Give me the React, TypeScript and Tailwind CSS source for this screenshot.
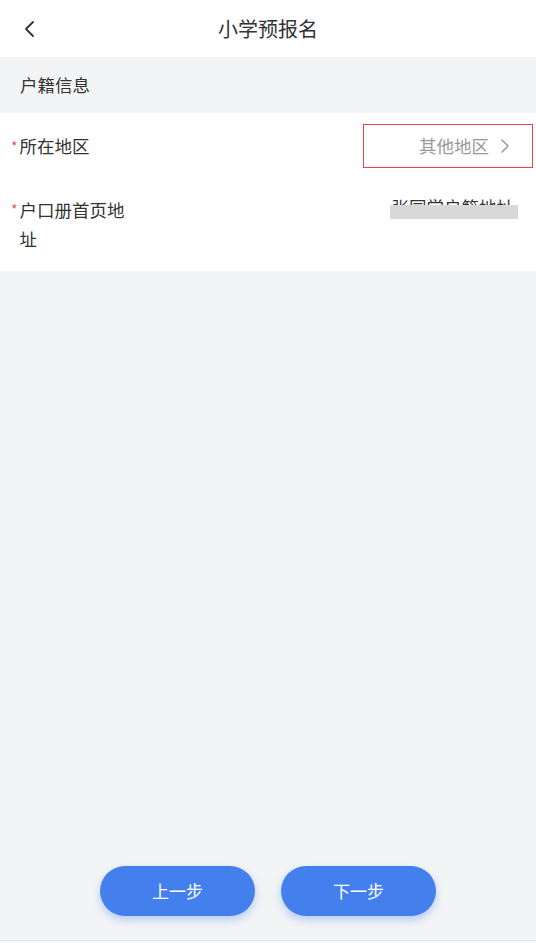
import React from "react";

export default function App() {
  return (
    <div
      className="w-[536px] h-[943px] flex flex-col bg-[#f3f4f6] text-[#333333]"
      style={{ fontFamily: '"Noto Sans CJK SC", "Noto Sans", sans-serif' }}
    >
      <div className="h-[57px] bg-white flex items-center relative shrink-0">
        <div className="pl-[22px] w-[60px] flex items-center">
          <svg width="14" height="20" viewBox="0 0 14 20" fill="none">
            <path d="M11 3 L4 10 L11 17" stroke="#333" strokeWidth="1.8" strokeLinecap="round" strokeLinejoin="round" />
          </svg>
        </div>
        <div className="flex-1 text-center text-[20px] leading-none pr-[60px] text-[#333]">小学预报名</div>
      </div>
      <div className="h-[56px] flex items-center px-[20px] text-[17.5px] text-[#333] shrink-0">户籍信息</div>
      <div className="bg-white flex flex-col shrink-0 pb-[18px]">
        <div className="flex items-center justify-between h-[66px] pr-[3px]">
          <div className="flex items-center pl-[11px] text-[17.5px]">
            <span className="text-[#e05a5a] text-[14px] mr-[2px] leading-none">*</span>
            <span>所在地区</span>
          </div>
          <div className="w-[170px] h-[44px] border border-[#e04848] flex items-center justify-end pr-[22px] gap-[11px] text-[17.5px] text-[#999]">
            <span>其他地区</span>
            <svg width="10" height="16" viewBox="0 0 10 16" fill="none">
              <path d="M2 2 L8 8 L2 14" stroke="#999" strokeWidth="1.6" strokeLinecap="round" strokeLinejoin="round" />
            </svg>
          </div>
        </div>
        <div className="flex justify-between pt-[16px] pr-[22px]">
          <div className="flex pl-[11px] text-[17.5px] leading-[29px]">
            <span className="text-[#e05a5a] text-[14px] mr-[2px] leading-[29px]">*</span>
            <span className="w-[112px]">户口册首页地址</span>
          </div>
          <div className="relative text-[17.5px] leading-[20px] text-[#333] h-[20px] mt-[2px]">
            张同学户籍地址
            <div className="absolute -left-[2px] -right-[4px] top-[8px] h-[14px] bg-[#d8d8d8]" />
          </div>
        </div>
      </div>
      <div className="flex-1" />
      <div className="flex justify-center gap-[26px] pb-[24px] shrink-0">
        <button className="w-[155px] h-[50px] rounded-full bg-[#4380ee] text-white text-[17px] shadow-[0_4px_8px_rgba(67,128,238,0.35)]">上一步</button>
        <button className="w-[155px] h-[50px] rounded-full bg-[#4380ee] text-white text-[17px] shadow-[0_4px_8px_rgba(67,128,238,0.35)]">下一步</button>
      </div>
      <div className="h-[3px] border-t border-[#e6e6e6] bg-[#f8f8f8] shrink-0" />
    </div>
  );
}
